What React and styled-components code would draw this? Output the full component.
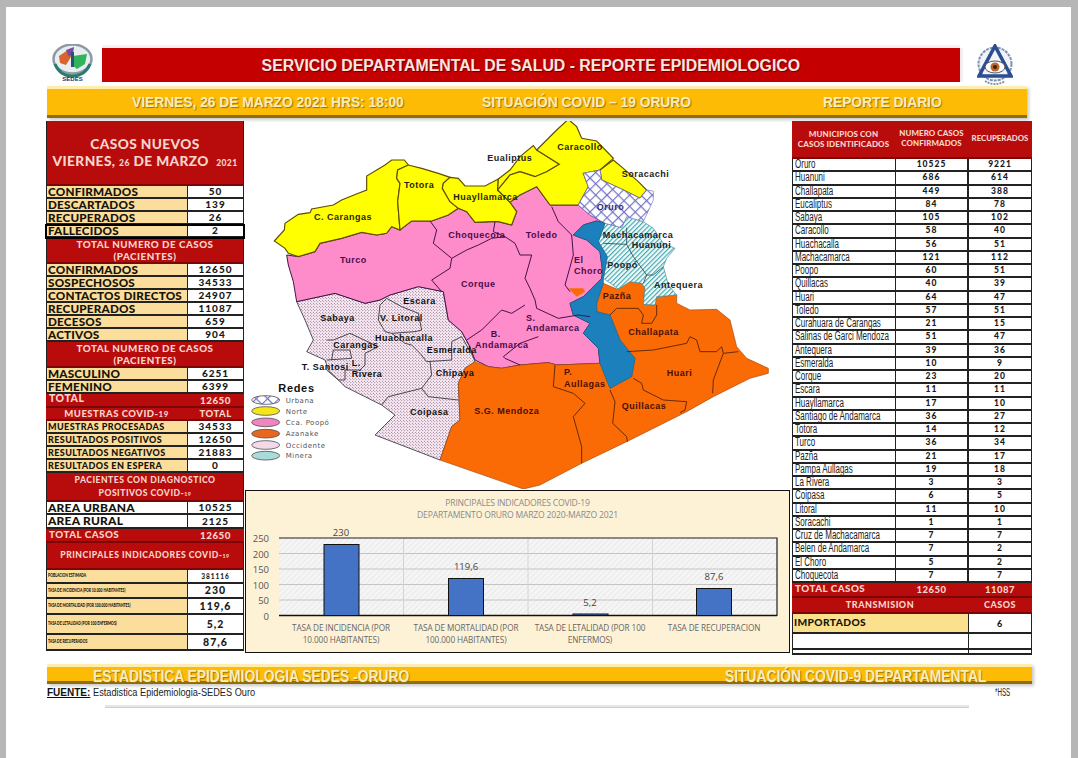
import React from 'react'
import styled, { createGlobalStyle } from 'styled-components'

const Global = createGlobalStyle`
html, body { margin: 0; padding: 0; height: 758px; overflow: hidden; background: #b6b6b6; }
* { box-sizing: border-box; }
`

const Sheet = styled.div`
  margin: 7px 0 0 6px;
  width: 1065px;
  height: 751px;
  background: #fff;
  padding: 37px 0 0 40px;
  font-family: "Liberation Sans", Arial, sans-serif;
  overflow: hidden;
`
const Head = styled.header`
  display: grid;
  grid-template-columns: 41px 858px 44px;
  column-gap: 9px;
  height: 42px;
  padding-left: 6px;
  align-items: start;
  svg { display: block; }
  svg:last-child { justify-self: end; }
`
const RedBar = styled.div`
  height: 34px;
  margin-top: 4px;
  background: #c40000;
  box-shadow: 0 -3px 0 #faeef0, 3px 0 0 #f6eeee;
  color: #f8e6e0;
  font-size: 17.4px;
  font-weight: 700;
  display: flex;
  align-items: center;
  justify-content: center;
  text-shadow: 1px 1px 1px #600;
`
const Band = styled.div`
  display: grid;
  grid-template-columns: ${p => p.$cols};
  align-items: center;
  width: ${p => p.$w}px;
  height: ${p => p.$h}px;
  margin: ${p => p.$top || 0}px 0 0 1px;
  padding: 0 0 ${p => p.$pb || 0}px ${p => p.$pad}px;
  background: #fdbb05;
  border-top: 3px solid #fdeeb0;
  border-bottom: 3px solid #8f6d07;
  box-shadow: 2px 2px 3px #c9c9c9;
  color: #f7ecc0;
  font-size: ${p => p.$fs}px;
  font-weight: 700;
  text-shadow: 1px 1px 1px #9a7300;
  white-space: nowrap;
`
const Squeeze = styled.span`
  display: inline-block;
  white-space: nowrap;
  transform: scaleX(${p => p.$x});
  transform-origin: ${p => p.$origin || 'left'} center;
`
const Main = styled.main`
  display: grid;
  grid-template-columns: 198px 548px 240px;
  margin-top: 3px;
  height: 534px;
`
const Column = styled.section`
  display: flex;
  flex-direction: column;
`
const Row = styled.div`
  display: grid;
  grid-template-columns: ${p => p.$cols || '141px 1fr'};
  grid-template-rows: minmax(0, 1fr);
  height: ${p => p.$h || 13}px;
  flex: none;
  position: relative;
  ${p => p.$boxed && 'outline: 2px solid #000; outline-offset: -1px; z-index: 1;'}
`
const Label = styled.div`
  background: ${p => p.$bg || '#fbdd9c'};
  border: 1px solid #222;
  border-width: 0 0 2px 1px;
  color: #16130a;
  font: 900 ${p => p.$fs || 11.7}px/9px Lato, sans-serif;
  letter-spacing: ${p => p.$ls ?? .2}px;
  display: flex;
  align-items: center;
  padding: 0 0 1px 1px;
  white-space: nowrap;
`
const Value = styled.div`
  background: #fff;
  border: 1px solid #222;
  border-width: 0 1px 2px 1px;
  color: #1a1a1a;
  font: 900 ${p => p.$fs || 10}px/9px Lato, sans-serif;
  letter-spacing: 1px;
  display: flex;
  align-items: center;
  justify-content: center;
`
const RedCell = styled.div`
  background: #b80c0c;
  border-bottom: 2px solid #7a0606;
  color: #f7d5cc;
  font: 900 ${p => p.$fs || 9.8}px/${p => p.$lh || 1.25} Lato, sans-serif;
  letter-spacing: ${p => p.$ls ?? .5}px;
  display: flex;
  align-items: center;
  justify-content: ${p => (p.$left ? 'flex-start' : 'center')};
  text-align: center;
  padding: ${p => (p.$left ? '0 0 2px 3px' : 0)};
  white-space: nowrap;
`
const RedBlock = styled(RedCell)`
  height: ${p => p.$h}px;
  flex: none;
  flex-direction: column;
  border-left: 1px solid #222;
  border-right: 1px solid #222;
  small { font-size: .62em; }
`
const BigTitle = styled.div`
  font-size: ${p => p.$fs}px;
  letter-spacing: .4px;
  line-height: 1.2;
`
const Center = styled.div`
  display: flex;
  flex-direction: column;
  padding-left: 1px;
`
const MapBox = styled.div`
  height: 368px;
  flex: none;
  svg { display: block; }
`
const ChartPanel = styled.div`
  margin-top: 1px;
  width: 545px;
  height: 163px;
  flex: none;
  background: #fdf2d6;
  border: 1px solid #111;
  display: flex;
  flex-direction: column;
  svg { display: block; }
`
const ChartTitle = styled.div`
  height: 29px;
  padding-top: 6px;
  text-align: center;
  color: #8a8a8a;
  font: 8.6px/12px "Open Sans", sans-serif;
  letter-spacing: -.2px;
`
const TownName = styled.div`
  border: 1px solid #222;
  border-width: 0 0 2px 1px;
  background: #fff;
  color: #222;
  font-size: 12.5px;
  line-height: 11px;
  padding-left: 2px;
`
const Blank = styled.div`
  border: 1px solid #222;
  border-width: 0 ${p => p.$r || 0}px 2px 1px;
  background: #fff;
`
const SourceRow = styled.div`
  display: flex;
  justify-content: space-between;
  width: 972px;
  margin: 3px 0 0 1px;
  height: 12px;
  line-height: 12px;
  font-size: 10px;
  color: #222;
  b { text-decoration: underline; font-weight: 700; color: #111; }
`
const Rule = styled.div`
  width: 864px;
  height: 3px;
  margin: 6px 0 0 59px;
  background: #e6e6e6;
  border-bottom: 1px solid #cfcfcf;
`

const casesA = [['CONFIRMADOS', '50'], ['DESCARTADOS', '139'], ['RECUPERADOS', '26']]
const casesB = [['CONFIRMADOS', '12650'], ['SOSPECHOSOS', '34533'], ['CONTACTOS DIRECTOS', '24907'], ['RECUPERADOS', '11087'], ['DECESOS', '659'], ['ACTIVOS', '904']]
const samples = [['MUESTRAS PROCESADAS', '34533'], ['RESULTADOS POSITIVOS', '12650'], ['RESULTADOS NEGATIVOS', '21883'], ['RESULTADOS EN ESPERA', '0']]
const rates = [
  ['POBLACION ESTIMADA', '381116', 14, 6.5],
  ['TASA DE INCIDENCIA (POR 10.000 HABITANTES)', '230', 15, 10.5],
  ['TASA DE MORTALIDAD (POR 100.000 HABITANTES)', '119,6', 16, 10.5],
  ['TASA DE LETALIDAD (POR 100 ENFERMOS)', '5,2', 20, 10.5],
  ['TASA DE RECUPERADOS', '87,6', 16, 10.5],
]
const towns = [
  ['Oruro', '10525', '9221'], ['Huanuni', '686', '614'], ['Challapata', '449', '388'], ['Eucaliptus', '84', '78'],
  ['Sabaya', '105', '102'], ['Caracollo', '58', '40'], ['Huachacalla', '56', '51'], ['Machacamarca', '121', '112'],
  ['Poopo', '60', '51'], ['Quillacas', '40', '39'], ['Huari', '64', '47'], ['Toledo', '57', '51'],
  ['Curahuara de Carangas', '21', '15'], ['Salinas de Garci Mendoza', '51', '47'], ['Antequera', '39', '36'],
  ['Esmeralda', '10', '9'], ['Corque', '23', '20'], ['Escara', '11', '11'], ['Huayllamarca', '17', '10'],
  ['Santiago de Andamarca', '36', '27'], ['Totora', '14', '12'], ['Turco', '36', '34'], ['Pazña', '21', '17'],
  ['Pampa Aullagas', '19', '18'], ['La Rivera', '3', '3'], ['Coipasa', '6', '5'], ['Litoral', '11', '10'],
  ['Soracachi', '1', '1'], ['Cruz de Machacamarca', '7', '7'], ['Belen de Andamarca', '7', '2'], ['El Choro', '5', '2'],
  ['Choquecota', '7', '7'],
]

function HealthLogo() {
  return (
    <svg width="41" height="40" viewBox="0 0 41 40">
      <ellipse cx="20.5" cy="15" rx="19" ry="14.5" fill="#e8eef0" stroke="#8d9aa5" strokeWidth="2.5" />
      <path d="M7 12 L16 6 L19 13 L14 21 L8 19 Z" fill="#d9642c" />
      <path d="M14 6 L22 3 L21 10 L17 13 Z" fill="#7c4a9c" />
      <path d="M21 12 L35 10 L33 20 L25 25 L20 21 Z" fill="#2fb45a" />
      <path d="M19 8 L22 8 L22 23 L19 23 Z" fill="#27507a" />
      <path d="M3 20 C7 30 14 32 20 32 C27 32 34 30 38 20" fill="none" stroke="#2a7a70" strokeWidth="3" />
      <text x="20.5" y="37" textAnchor="middle" fontFamily="Liberation Sans" fontWeight="700" fontSize="6" fill="#26306b">SEDES</text>
    </svg>
  )
}

function EyeLogo() {
  return (
    <svg width="36" height="43" viewBox="0 0 36 43">
      <circle cx="18" cy="20" r="16.5" fill="#f1f3f5" stroke="#7f93b5" strokeWidth="2" strokeDasharray="3 1" />
      <path d="M18 2 L34 32 L2 32 Z" fill="none" stroke="#2b4e93" strokeWidth="3.5" />
      <ellipse cx="18" cy="23" rx="10" ry="6" fill="#fff" stroke="#555" />
      <circle cx="18" cy="23" r="4.5" fill="#b9672c" />
      <circle cx="18" cy="23" r="2" fill="#40210c" />
      <path d="M8 37 C14 41 22 41 28 37" fill="none" stroke="#8a93a8" strokeWidth="2" strokeDasharray="2 1" />
    </svg>
  )
}

const mapLabels = [
  ['C. Carangas', 207, 305, '#2a2a00'], ['Totora', 477, 210, '#1f1f00'], ['Huayllamarca', 625, 245, '#1f1f00'],
  ['Choquecota', 610, 360, '#4a0b4a'], ['Turco', 285, 435, '#4a0b4a'], ['Corque', 648, 508, '#4a0b4a'],
  ['Eualiptus', 727, 128, '#222'], ['Caracollo', 937, 95, '#1f1f00'], ['Soracachi', 1130, 178, '#222'],
  ['Oruro', 1055, 277, '#2c2c70'], ['Toledo', 842, 360, '#4a0b4a'], ['Machacamarca', 1073, 360, '#222'],
  ['Huanuni', 1160, 390, '#222'], ['El', 987, 435, '#4a0b4a'], ['Choro', 987, 468, '#4a0b4a'],
  ['Poopó', 1087, 450, '#222'], ['Antequera', 1227, 510, '#222'], ['Pazña', 1073, 542, '#4a0f00'],
  ['Sabaya', 226, 608, '#111'], ['Escara', 475, 557, '#111'], ['V. Litoral', 405, 610, '#111'],
  ['Huachacalla', 390, 668, '#111'], ['Carangas', 265, 690, '#111'], ['Esmeralda', 545, 705, '#111'],
  ['T. Santosi', 170, 757, '#111'], ['L.', 320, 745, '#111'], ['Rivera', 320, 778, '#111'],
  ['Chipaya', 572, 775, '#111'], ['Coipasa', 495, 890, '#111'], ['S.G. Mendoza', 688, 888, '#4a0f00'],
  ['B.', 737, 656, '#4a0b4a'], ['Andamarca', 690, 690, '#4a0b4a'], ['S.', 843, 608, '#4a0b4a'],
  ['Andamarca', 843, 640, '#4a0b4a'], ['P.', 957, 770, '#4a0f00'], ['Aullagas', 957, 806, '#4a0f00'],
  ['Challapata', 1150, 650, '#4a0f00'], ['Huari', 1265, 773, '#4a0f00'], ['Quillacas', 1130, 873, '#4a0f00'],
]

const legend = [
  ['Urbana', 'url(#urbana)', 855], ['Norte', '#f5e61a', 888], ['Cca. Poopó', '#ee86c0', 922],
  ['Azanake', '#e8671e', 956], ['Occidente', '#f3d9ea', 990], ['Minera', '#a9dcd8', 1022],
]

const pink = 'M125,420 L160,425 210,410 225,385 290,370 350,352 395,360 425,355 440,335 465,345 500,318 560,318 610,300 640,280 665,290 690,322 740,320 760,320 800,330 815,290 795,262 825,240 875,215 915,270 1000,270 1035,300 1080,325 1055,318 1015,330 985,360 1025,375 1065,410 1073,470 1070,490 1040,520 1015,545 975,565 985,600 1035,625 1015,655 1060,700 1065,745 935,750 910,743 825,750 770,760 730,755 690,735 672,690 650,650 610,615 595,530 520,515 435,540 405,555 360,565 270,535 155,560 145,500 130,450 Z'
const occidente = 'M155,560 L270,535 360,565 405,555 435,540 520,515 595,530 610,615 650,650 672,690 690,740 660,760 640,805 645,915 620,935 585,1035 390,960 450,900 410,870 300,815 250,765 240,735 185,710 205,675 180,615 Z'
const orange = 'M585,1035 L620,935 645,915 640,805 660,760 690,740 730,755 770,760 825,750 910,743 935,750 1065,745 1095,820 1160,785 1170,730 1125,675 1095,600 1055,590 1055,565 1075,505 1115,522 1155,500 1190,505 1200,520 1195,568 1230,570 1235,545 1295,540 1295,565 1335,585 1415,583 1455,615 1475,695 1505,730 1570,760 1570,775 1515,790 1405,845 1325,890 1145,980 1010,1045 885,1110 835,1122 Z'
const blue = 'M985,360 L1015,330 1055,318 1080,325 1060,380 1087,425 1075,490 1075,505 1055,565 1055,590 1095,600 1125,675 1170,730 1160,785 1095,820 1065,745 1060,700 1015,655 1035,625 985,600 975,565 1015,545 1040,520 1070,490 1073,470 1065,410 1025,375 Z'
const minera = 'M1080,325 L1130,338 1145,305 1195,320 1225,340 1255,385 1290,400 1265,430 1255,455 1270,510 1295,540 1235,545 1230,570 1195,568 1200,520 1190,505 1155,500 1120,522 1075,490 1087,425 1060,380 Z'
const urbana = 'M1015,175 L1065,165 1070,195 1135,225 1185,250 1205,225 1225,228 1225,255 1195,320 1145,305 1130,338 1080,325 1035,300 1000,270 1030,215 Z'

const yellows = [
  'M88,378 L118,345 120,325 160,298 195,293 200,282 265,270 290,255 340,235 365,225 365,183 420,150 440,135 478,135 490,150 458,165 455,190 465,205 458,260 465,345 440,335 425,355 395,360 350,352 290,370 225,385 210,410 160,425 130,415 120,400 Z',
  'M458,165 L490,150 530,160 580,175 615,187 595,205 592,220 615,260 640,280 610,300 560,318 500,318 465,345 458,260 465,205 455,190 Z',
  'M615,187 L640,190 660,213 720,213 760,192 758,225 795,262 815,290 800,330 760,320 740,320 690,322 665,290 640,280 615,260 592,220 595,205 Z',
  'M760,192 L795,165 825,125 865,92 875,105 943,148 905,170 870,185 825,170 795,180 758,225 Z',
  'M875,105 L935,45 970,13 995,35 1010,70 1055,78 1105,130 1065,165 1015,175 1030,215 1000,270 915,270 875,215 825,240 795,262 758,225 795,180 825,170 870,185 905,170 943,148 Z',
  'M1065,165 L1105,135 1135,160 1180,200 1205,225 1185,250 1135,225 1070,195 Z',
]
const pinkLines = 'M555,318 L575,345 565,385 620,430 665,405 700,390 740,370 780,365 810,385 825,420 860,420 840,490 855,520 870,555 875,580 940,610 1000,600 1035,605 M620,430 L615,460 560,495 590,530 M750,320 L745,350 780,365 M920,275 L940,320 980,360 985,420 960,510 975,530 M665,675 L710,645 770,585 800,595 840,570 M775,725 L825,685 880,665 M825,750 L780,730 775,725'
const occLines = 'M405,570 L425,550 470,575 520,595 530,645 510,650 440,655 420,650 400,615 Z M440,655 L480,685 500,690 525,715 545,740 620,735 620,680 650,665 690,735 M555,740 L560,780 530,820 550,845 640,855 M530,820 L430,845 410,870 M245,675 L265,675 315,655 400,695 360,715 360,750 345,765 300,765 300,795 280,795 245,765 M245,735 L320,730 315,705 265,705 260,735'
const orangeLines = 'M930,750 L925,815 985,835 1020,865 985,905 1010,995 1010,1045 M1095,825 L1110,860 1103,925 1145,965 1147,980 M1165,790 L1190,805 1195,825 1255,855 1325,860 1320,885 1305,893 M1145,710 L1225,705 1325,685 1335,665 1355,675 1365,710 1415,710 1430,695 1435,715 1480,710 M1435,715 L1405,795 1403,835 M1095,600 L1115,580 1180,580 1195,600 1190,625 1220,625 1235,600 1235,570'
const mineraLines = 'M1075,385 L1145,388 1165,425 1205,480 1225,480 1255,455 M1145,338 L1145,388 M1205,480 L1195,505'

function OruroMap() {
  return (
    <svg width="548" height="368" viewBox="0 18 1644 1104">
      <defs>
        <pattern id="urbana" width="24" height="24" patternUnits="userSpaceOnUse" patternTransform="rotate(45)">
          <rect width="24" height="24" fill="#fff" />
          <path d="M0 0H24M0 0V24" stroke="#7474c4" strokeWidth="7" />
        </pattern>
        <pattern id="minera" width="10" height="10" patternUnits="userSpaceOnUse" patternTransform="rotate(-45)">
          <rect width="10" height="10" fill="#f1fbfb" />
          <path d="M0 0H10" stroke="#45a9b0" strokeWidth="7" />
        </pattern>
        <pattern id="occidente" width="9" height="9" patternUnits="userSpaceOnUse">
          <rect width="9" height="9" fill="#fbeaf6" />
          <circle cx="2.5" cy="2.5" r="1.4" fill="#3c2a3c" />
          <circle cx="7" cy="7" r="1.4" fill="#3c2a3c" />
        </pattern>
      </defs>
      <path d={occidente} fill="url(#occidente)" stroke="#55505a" strokeWidth="3" />
      <path d={pink} fill="#ff8cca" stroke="#43134a" strokeWidth="3" />
      <path d={orange} fill="#fa6b06" stroke="#a34a10" strokeWidth="2" />
      <path d={minera} fill="url(#minera)" stroke="#3d8f97" strokeWidth="2" />
      {yellows.map((d, i) => <path key={i} d={d} fill="#ffff00" stroke="#5f4e00" strokeWidth="3.5" />)}
      <path d={urbana} fill="url(#urbana)" stroke="#7474c4" strokeWidth="2" />
      <path d={blue} fill="#1b80bb" stroke="#14608f" strokeWidth="2" />
      <path d="M970,520 L1015,520 1020,530 995,545 Z" fill="#fa6b06" />
      <g fill="none">
        <path d={pinkLines} stroke="#43134a" strokeWidth="3" />
        <path d={occLines} stroke="#4a4650" strokeWidth="3" />
        <path d={orangeLines} stroke="#6a2a00" strokeWidth="3" />
        <path d={mineraLines} stroke="#264a50" strokeWidth="2.5" />
      </g>
      <g fontFamily="Liberation Sans" fontWeight="700" fontSize="27" letterSpacing="1.5">
        {mapLabels.map(([t, x, y, c], i) => <text key={i} x={x} y={y + 9} fill={c}>{t}</text>)}
      </g>
      <text x="100" y="830" fontFamily="Liberation Sans" fontWeight="700" fontSize="33" letterSpacing="2" fill="#111">Redes</text>
      {legend.map(([name, fill, y]) => (
        <g key={name}>
          <ellipse cx="62" cy={y} rx="42" ry="13" fill={fill} stroke="#555" strokeWidth="2.5" />
          <text x="122" y={y + 8} fontFamily="DejaVu Sans" fontSize="21" letterSpacing="1.5" fill="#555">{name}</text>
        </g>
      ))}
    </svg>
  )
}

const axis = [[250, 538], [200, 553.5], [150, 569], [100, 584.5], [50, 600], [0, 615.5]]
const bars = [
  { x: 325, top: 544.5, val: '230', labelY: 536, cx: 342, cat: ['TASA DE INCIDENCIA (POR', '10.000 HABITANTES)'] },
  { x: 449.5, top: 578.5, val: '119,6', labelY: 570, cx: 467, cat: ['TASA DE MORTALIDAD (POR', '100.000 HABITANTES)'] },
  { x: 574, top: 614, val: '5,2', labelY: 606, cx: 591, cat: ['TASA DE LETALIDAD (POR 100', 'ENFERMOS)'] },
  { x: 697.5, top: 588.5, val: '87,6', labelY: 580, cx: 715, cat: ['TASA DE RECUPERACION'] },
]

function RatesChart() {
  return (
    <svg width="543" height="132" viewBox="247 520 543 132">
      <defs>
        <pattern id="plotHatch" width="4" height="4" patternUnits="userSpaceOnUse" patternTransform="rotate(45)">
          <rect width="4" height="4" fill="#f5f5f5" />
          <path d="M0 0V4" stroke="#e4e4e4" strokeWidth="1.4" />
        </pattern>
      </defs>
      <rect x="280" y="538" width="498" height="77.5" fill="url(#plotHatch)" />
      {axis.slice(1, 5).map(([, y]) => <line key={y} x1="280" x2="778" y1={y} y2={y} stroke="#c4c4c4" strokeWidth="1" />)}
      {[404.5, 529, 653.5].map(x => <line key={x} x1={x} x2={x} y1="538" y2="615.5" stroke="#d4d4d4" strokeWidth="1" />)}
      <path d="M280,538 H778 V615.5 H280" fill="none" stroke="#1e1e1e" strokeWidth="1.2" />
      <line x1="280" x2="778" y1="615.5" y2="615.5" stroke="#111" strokeWidth="1.5" />
      <g fontFamily="Open Sans" fontSize="9.5" fill="#555" textAnchor="end">
        {axis.map(([v, y]) => <text key={v} x="270" y={y + 4}>{v}</text>)}
      </g>
      {bars.map(b => (
        <g key={b.val}>
          <rect x={b.x} y={b.top} width="35" height={615.5 - b.top} fill="#4472c4" stroke="#111" strokeWidth="1" />
          <text x={b.cx} y={b.labelY} textAnchor="middle" fontFamily="Open Sans" fontSize="9.5" fill="#444">{b.val}</text>
          {b.cat.map((line, i) => (
            <text key={line} x={b.cx} y={631 + i * 12.4} textAnchor="middle" fontFamily="Open Sans" fontSize="8.2" letterSpacing="-.1" fill="#666">{line}</text>
          ))}
        </g>
      ))}
    </svg>
  )
}

export default function App() {
  return (
    <>
      <Global />
      <Sheet>
        <Head>
          <HealthLogo />
          <RedBar><Squeeze $x={.91} $origin="center">SERVICIO DEPARTAMENTAL DE SALUD - REPORTE EPIDEMIOLOGICO</Squeeze></RedBar>
          <EyeLogo />
        </Head>
        <Band $cols="350px 341px 1fr" $w={980} $h={32} $pad={85} $fs={14.5}>
          <Squeeze $x={.95}>VIERNES, 26 DE MARZO 2021 HRS: 18:00</Squeeze>
          <Squeeze $x={.95}>SITUACIÓN COVID – 19 ORURO</Squeeze>
          <Squeeze $x={.95}>REPORTE DIARIO</Squeeze>
        </Band>
        <Main>
          <Column>
            <RedBlock $h={65} $ls={0}>
              <BigTitle $fs={13.7}>CASOS NUEVOS</BigTitle>
              <BigTitle $fs={13.7}>VIERNES, <small>26</small> DE MARZO &nbsp;<small>2021</small></BigTitle>
            </RedBlock>
            {casesA.map(([l, v]) => (
              <Row key={l}><Label>{l}</Label><Value>{v}</Value></Row>
            ))}
            <Row $boxed><Label>FALLECIDOS</Label><Value>2</Value></Row>
            <RedBlock $h={26}>TOTAL NUMERO DE CASOS<span>(PACIENTES)</span></RedBlock>
            {casesB.map(([l, v]) => (
              <Row key={l}><Label>{l}</Label><Value>{v}</Value></Row>
            ))}
            <RedBlock $h={26}>TOTAL NUMERO DE CASOS<span>(PACIENTES)</span></RedBlock>
            <Row><Label>MASCULINO</Label><Value>6251</Value></Row>
            <Row><Label>FEMENINO</Label><Value>6399</Value></Row>
            <Row $h={14}><RedCell $left $fs={10.5}>TOTAL</RedCell><RedCell>12650</RedCell></Row>
            <Row><RedCell $fs={9.5}><span>MUESTRAS COVID-<small>19</small></span></RedCell><RedCell $fs={9.5}>TOTAL</RedCell></Row>
            {samples.map(([l, v]) => (
              <Row key={l}><Label $fs={9} $ls={.4}>{l}</Label><Value>{v}</Value></Row>
            ))}
            <RedBlock $h={29} $fs={8.6} $lh={1.4}>PACIENTES CON DIAGNOSTICO<span>POSITIVOS COVID-<small>19</small></span></RedBlock>
            <Row><Label $bg="#fff" $fs={12}>AREA URBANA</Label><Value>10525</Value></Row>
            <Row $h={14}><Label $bg="#fff" $fs={12}>AREA RURAL</Label><Value>2125</Value></Row>
            <Row $h={14}><RedCell $left>TOTAL CASOS</RedCell><RedCell>12650</RedCell></Row>
            <RedBlock $h={27} $fs={8.6}><span>PRINCIPALES INDICADORES COVID-<small>19</small></span></RedBlock>
            {rates.map(([l, v, h, fs]) => (
              <Row key={l} $h={h}>
                <Label $fs={5.5} $ls={0}><Squeeze $x={.62}>{l}</Squeeze></Label>
                <Value $fs={fs}>{v}</Value>
              </Row>
            ))}
          </Column>
          <Center>
            <MapBox><OruroMap /></MapBox>
            <ChartPanel>
              <ChartTitle>
                PRINCIPALES INDICADORES COVID-19<br />
                DEPARTAMENTO ORURO MARZO 2020-MARZO 2021
              </ChartTitle>
              <RatesChart />
            </ChartPanel>
          </Center>
          <Column>
            <Row $h={38} $cols="103px 73px 1fr">
              <RedCell $fs={8} $ls={.1}>MUNICIPIOS CON<br />CASOS IDENTIFICADOS</RedCell>
              <RedCell $fs={7.9} $ls={.1}>NUMERO CASOS<br />CONFIRMADOS</RedCell>
              <RedCell $fs={7.8} $ls={0}>RECUPERADOS</RedCell>
            </Row>
            {towns.map(([name, a, b]) => (
              <Row key={name} $h={13.25} $cols="103px 73px 1fr">
                <TownName><Squeeze $x={.64}>{name}</Squeeze></TownName>
                <Value $fs={8.5}>{a}</Value>
                <Value $fs={8.5}>{b}</Value>
              </Row>
            ))}
            <Row $h={15} $cols="103px 73px 1fr">
              <RedCell $left>TOTAL CASOS</RedCell>
              <RedCell $fs={9.5}>12650</RedCell>
              <RedCell $fs={9.5}>11087</RedCell>
            </Row>
            <Row $h={16} $cols="176px 1fr">
              <RedCell $fs={9}>TRANSMISION</RedCell>
              <RedCell $fs={9}>CASOS</RedCell>
            </Row>
            <Row $h={20} $cols="176px 1fr">
              <Label $bg="#fbe08e" $fs={10.2} $ls={.4}>IMPORTADOS</Label>
              <Value $fs={9}>6</Value>
            </Row>
            <Row $h={16} $cols="176px 1fr"><Blank /><Blank $r={1} /></Row>
            <Row $h={5} $cols="176px 1fr"><Blank /><Blank $r={1} /></Row>
          </Column>
        </Main>
        <Band $cols="632px 1fr" $w={985} $h={20} $pad={46} $fs={17} $top={9} $pb={2}>
          <Squeeze $x={.814}>ESTADISTICA EPIDEMIOLOGIA SEDES -ORURO</Squeeze>
          <Squeeze $x={.814}>SITUACIÓN COVID-9 DEPARTAMENTAL</Squeeze>
        </Band>
        <SourceRow>
          <span><b>FUENTE:</b> <Squeeze $x={.92}>Estadistica Epidemiologia-SEDES Ouro</Squeeze></span>
          <Squeeze $x={.62}>*HSS</Squeeze>
        </SourceRow>
        <Rule />
      </Sheet>
    </>
  )
}
